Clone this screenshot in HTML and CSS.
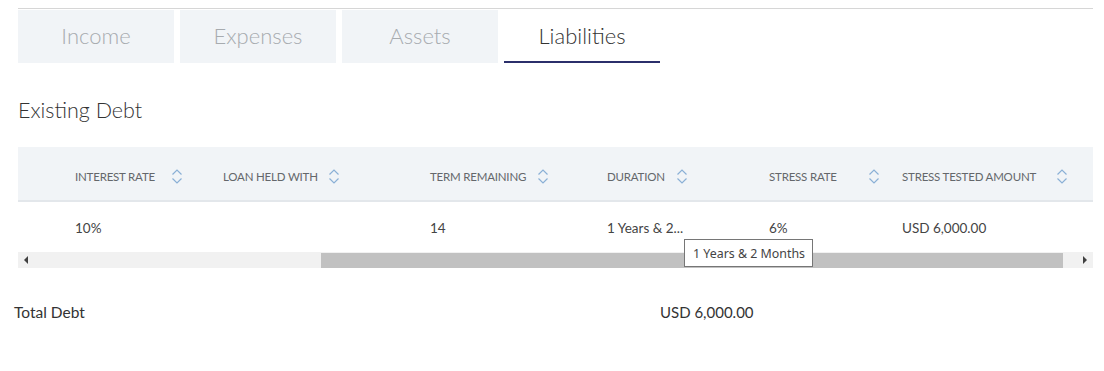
FILE: index.html
```html
<!DOCTYPE html>
<html>
<head>
<meta charset="utf-8">
<link rel="stylesheet" href="styles.css">
</head>
<body>
<div class="page">
  <div class="topline"></div>
  <div class="tabs">
    <div class="tab">Income</div>
    <div class="tab">Expenses</div>
    <div class="tab">Assets</div>
    <div class="tab active">Liabilities</div>
  </div>
  <h2 class="section-title">Existing Debt</h2>
  <div class="table">
    <div class="thead">
      <div class="lead"></div>
      <div class="th c1"><span class="lbl">INTEREST RATE</span><svg class="sort" viewBox="0 0 10 15"><path d="M0.5 5.5 L5 1 L9.5 5.5 M0.5 9.5 L5 14 L9.5 9.5"/></svg></div>
      <div class="th c2"><span class="lbl">LOAN HELD WITH</span><svg class="sort" viewBox="0 0 10 15"><path d="M0.5 5.5 L5 1 L9.5 5.5 M0.5 9.5 L5 14 L9.5 9.5"/></svg></div>
      <div class="th c3"><span class="lbl">TERM REMAINING</span><svg class="sort" viewBox="0 0 10 15"><path d="M0.5 5.5 L5 1 L9.5 5.5 M0.5 9.5 L5 14 L9.5 9.5"/></svg></div>
      <div class="th c4"><span class="lbl">DURATION</span><svg class="sort" viewBox="0 0 10 15"><path d="M0.5 5.5 L5 1 L9.5 5.5 M0.5 9.5 L5 14 L9.5 9.5"/></svg></div>
      <div class="th c5"><span class="lbl">STRESS RATE</span><svg class="sort" viewBox="0 0 10 15"><path d="M0.5 5.5 L5 1 L9.5 5.5 M0.5 9.5 L5 14 L9.5 9.5"/></svg></div>
      <div class="th c6"><span class="lbl">STRESS TESTED AMOUNT</span><svg class="sort" viewBox="0 0 10 15"><path d="M0.5 5.5 L5 1 L9.5 5.5 M0.5 9.5 L5 14 L9.5 9.5"/></svg></div>
    </div>
    <div class="trow">
      <div class="lead"></div>
      <div class="td c1">10%</div>
      <div class="td c2"></div>
      <div class="td c3">14</div>
      <div class="td c4">1 Years &amp; 2...</div>
      <div class="td c5">6%</div>
      <div class="td c6">USD 6,000.00</div>
    </div>
    <div class="scrollbar">
      <div class="arrow left"></div>
      <div class="track">
        <div class="thumb"></div>
      </div>
      <div class="arrow right"></div>
    </div>
    <div class="tooltip">1 Years &amp; 2 Months</div>
  </div>
  <div class="total">
    <span class="total-label">Total Debt</span>
    <span class="total-value">USD 6,000.00</span>
  </div>
</div>
</body>
</html>
```

FILE: styles.css
```css
* { box-sizing: border-box; }
html, body { margin: 0; padding: 0; background: #fff; }
body {
  font-family: "Source Sans Pro", Lato, "Noto Sans", sans-serif;
  color: #333;
  width: 1104px;
  height: 371px;
  overflow: hidden;
}
.page {
  padding-top: 8px;
}
.topline {
  margin-left: 18px;
  width: 1075px;
  height: 1px;
  background: #d6d6d6;
}
.tabs {
  display: flex;
  gap: 6px;
  margin-left: 18px;
  margin-top: 1px;
}
.tab {
  width: 156px;
  height: 53px;
  background: #f1f4f7;
  color: #a7abaf;
  font-size: 22px;
  font-weight: 300;
  display: flex;
  align-items: center;
  justify-content: center;
  padding-bottom: 2px;
}
.tab.active {
  background: #fff;
  color: #333;
  border-bottom: 2px solid #2b2f6b;
  padding-bottom: 0;
}
.section-title {
  margin: 34px 0 0 18px;
  font-weight: 300;
  font-size: 21.5px;
  line-height: 26px;
  color: #333;
}
.table {
  position: relative;
  margin: 24px 0 0 18px;
  width: 1075px;
}
.thead {
  display: flex;
  align-items: center;
  height: 55px;
  padding-top: 6px;
  background: #f1f4f7;
  border-bottom: 2px solid #e3e7eb;
}
.lead { width: 57px; flex: none; }
.th {
  display: flex;
  align-items: center;
  flex: none;
  font-size: 11.5px;
  letter-spacing: -0.2px;
  color: #64676b;
}
.th .lbl { flex: none; white-space: nowrap; }
.sort {
  width: 10px;
  height: 15px;
  flex: none;
  fill: none;
  stroke: #8bb0d6;
  stroke-width: 1.2;
}
.c1 { width: 148px; }
.c2 { width: 207px; }
.c3 { width: 177px; }
.c4 { width: 162px; }
.c5 { width: 133px; }
.c6 { width: 191px; }
.c1 .lbl { width: 97px; }
.c2 .lbl { width: 106px; }
.c3 .lbl { width: 108px; }
.c4 .lbl { width: 70px; }
.c5 .lbl { width: 100px; }
.c6 .lbl { width: 155px; }
.trow {
  display: flex;
  align-items: center;
  height: 50px;
  padding-top: 2px;
}
.td {
  flex: none;
  font-size: 13.5px;
  color: #444;
  white-space: nowrap;
}
.scrollbar {
  display: flex;
  height: 16px;
  background: #f1f1f1;
}
.arrow {
  width: 16px;
  flex: none;
  display: flex;
  align-items: center;
  justify-content: center;
}
.arrow::before {
  content: "";
  width: 0;
  height: 0;
  border-top: 4px solid transparent;
  border-bottom: 4px solid transparent;
}
.arrow.left::before { border-right: 4px solid #404040; }
.arrow.right::before { border-left: 4px solid #404040; }
.track {
  flex: 1;
  display: flex;
  align-items: center;
  padding-left: 287px;
  padding-right: 14px;
}
.thumb {
  flex: 1;
  height: 15px;
  background: #c1c1c1;
}
.tooltip {
  position: absolute;
  left: 666px;
  top: 92px;
  width: 129px;
  height: 28px;
  background: #fff;
  border: 1px solid #767676;
  font-family: "Noto Sans", "Open Sans", sans-serif;
  font-size: 12.4px;
  color: #444;
  display: flex;
  align-items: center;
  padding-left: 8px;
  white-space: nowrap;
}
.total {
  display: flex;
  margin-top: 35px;
  padding-left: 14px;
  font-size: 15.5px;
  color: #333;
}
.total-label { width: 646px; }
.total-value { font-size: 15px; }
```
